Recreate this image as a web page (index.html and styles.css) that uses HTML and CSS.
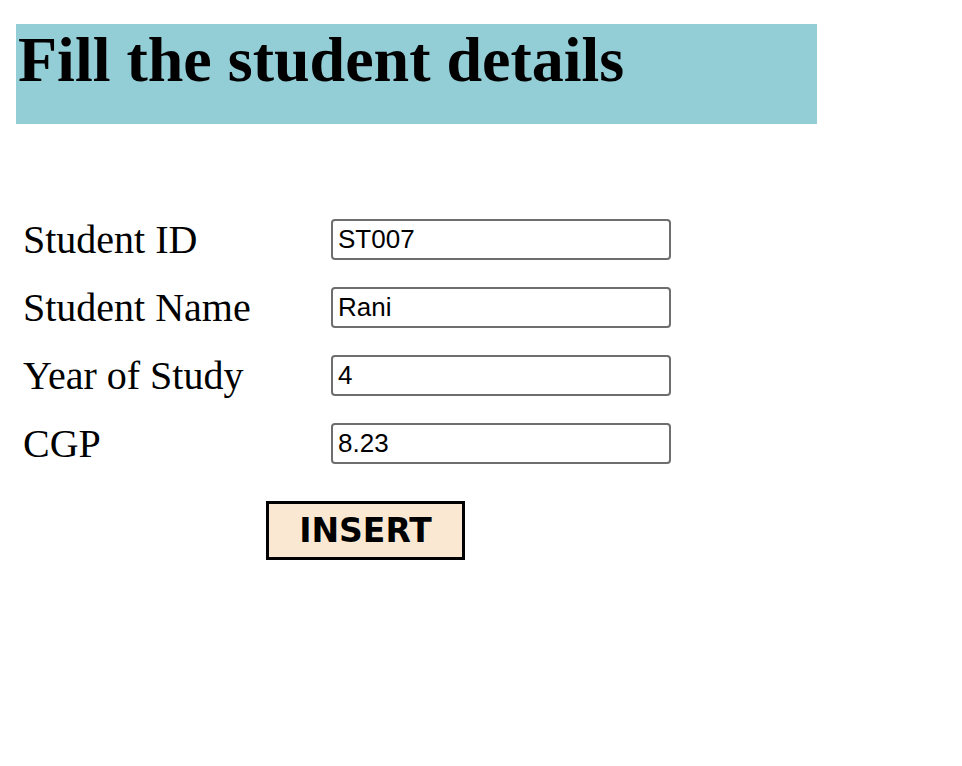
FILE: index.html
```html
<!DOCTYPE html>
<html>
<head>
<meta charset="utf-8">
<title>Student details</title>
<link rel="stylesheet" href="styles.css">
</head>
<body>
<div class="banner"><h1 class="title">Fill the student details</h1></div>
<form class="form">
  <div class="row"><label class="label">Student ID</label><input class="field" type="text" value="ST007"></div>
  <div class="row"><label class="label">Student Name</label><input class="field" type="text" value="Rani"></div>
  <div class="row"><label class="label">Year of Study</label><input class="field" type="text" value="4"></div>
  <div class="row"><label class="label">CGP</label><input class="field" type="text" value="8.23"></div>
  <div class="actions"><button class="btn" type="button">INSERT</button></div>
</form>
</body>
</html>
```
FILE: styles.css
```css
html, body { background: #ffffff; }
body {
  margin: 0;
  padding: 24px 16px;
  font-family: "Liberation Serif", "Times New Roman", serif;
  color: #000;
}
.banner {
  width: 801px;
  height: 100px;
  background: #93cdd6;
}
.title {
  margin: 0;
  padding-left: 2px;
  font-size: 64px;
  line-height: 72px;
  font-weight: bold;
}
.form {
  margin-top: 95px;
  padding-left: 7px;
  display: flex;
  flex-direction: column;
  gap: 27px;
}
.row {
  display: flex;
  align-items: center;
}
.label {
  width: 308px;
  font-size: 40px;
  line-height: 41px;
}
.field {
  box-sizing: border-box;
  width: 340px;
  height: 41px;
  margin: 0;
  padding: 0 5px;
  border: 2px solid #6e6e6e;
  border-radius: 4px;
  font-family: "Liberation Sans", Arial, sans-serif;
  font-size: 26px;
  color: #000;
  background: #fff;
}
.actions {
  margin-top: 10px;
  padding-left: 243px;
}
.btn {
  box-sizing: border-box;
  width: 199px;
  height: 59px;
  border: 3px solid #000;
  background: #fbe8d3;
  font-family: "DejaVu Sans", Verdana, sans-serif;
  font-weight: bold;
  font-size: 33px;
  color: #000;
  padding: 0;
}
```
